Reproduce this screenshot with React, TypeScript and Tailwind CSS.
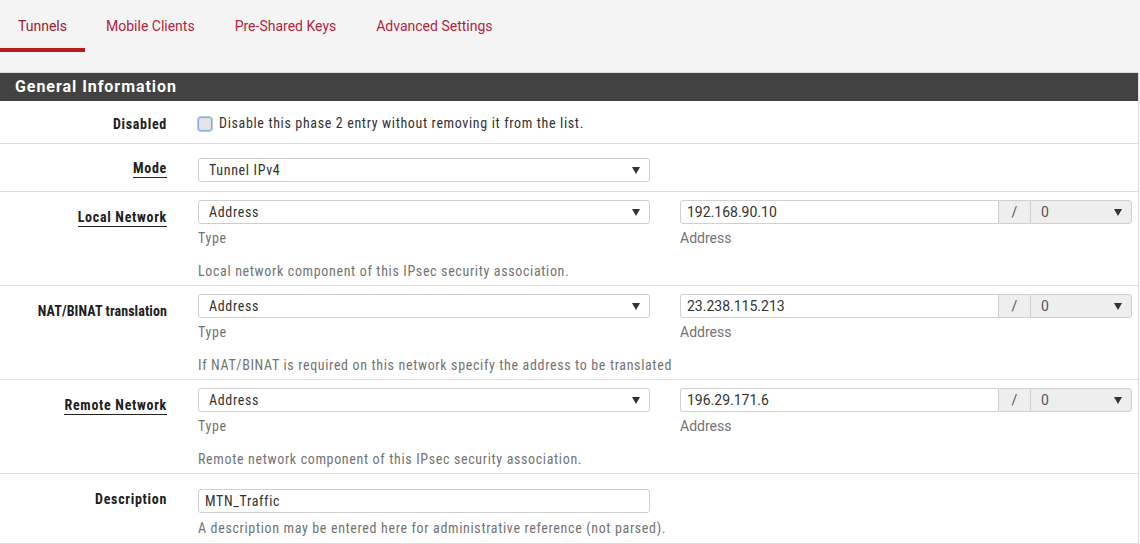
import React from 'react';

const cond = "font-['Roboto_Condensed','Roboto',sans-serif]";
const condText = "font-['Roboto_Condensed','Roboto',sans-serif] tracking-[0.65px]";

const Caret = () => (
    <svg width="8" height="8" viewBox="0 0 8 8" className="shrink-0">
        <path d="M0 1 L8 1 L4 8 Z" fill="#333" />
    </svg>
);

const Select: React.FC<{ value: string; className?: string }> = ({ value, className = '' }) => (
    <div className={`flex items-center justify-between h-[24px] border border-[#cfcfcf] rounded-[3px] bg-white pl-[10px] pr-[9px] text-[14px] text-[#333] ${className}`}>
        <span>{value}</span>
        <Caret />
    </div>
);

const Label: React.FC<{ text: string; underline?: boolean; tight?: boolean }> = ({ text, underline, tight }) => (
    <div className="w-[183px] shrink-0 pr-[16px] text-right">
        <span className={`${cond} ${tight ? 'tracking-[0.1px]' : 'tracking-[0.7px]'} text-[14px] font-bold text-[#212121] ${underline ? 'border-b border-[#212121] pb-[1px]' : ''}`}>
            {text}
        </span>
    </div>
);

const NetworkRow: React.FC<{ label: string; underline?: boolean; tight?: boolean; ip: string; help: string }> = ({ label, underline, tight, ip, help }) => (
    <div className="flex border-b border-[#ddd] pt-[8px] h-[94px]">
        <div className="pt-[5px]"><Label text={label} underline={underline} tight={tight} /></div>
        <div className="pl-[15px] flex flex-col">
            <div className="flex gap-[30px]">
                <div className="w-[452px]">
                    <Select value="Address" className={condText} />
                    <div className={`${condText} text-[14px] text-[#737373] mt-[4px]`}>Type</div>
                </div>
                <div className="w-[452px]">
                    <div className="flex h-[24px]">
                        <div className="flex-1 border border-[#cfcfcf] rounded-l-[3px] flex items-center pl-[6px] text-[14px] text-[#333] font-['Roboto',sans-serif]">{ip}</div>
                        <div className="w-[31px] border-y border-[#cfcfcf] bg-[#eee] flex items-center justify-center text-[14px] text-[#555]">/</div>
                        <div className="w-[102px] border border-[#cfcfcf] rounded-r-[3px] bg-[#eee] flex items-center justify-between pl-[10px] pr-[9px] text-[14px] text-[#555]">
                            <span>0</span>
                            <Caret />
                        </div>
                    </div>
                    <div className="text-[14px] text-[#737373] mt-[4px] font-['Roboto',sans-serif]">Address</div>
                </div>
            </div>
            <div className={`${condText} text-[14px] text-[#737373] mt-[12px]`}>{help}</div>
        </div>
    </div>
);

export default function App() {
    return (
        <div className="w-[1140px] h-[544px] bg-[#f4f4f4] overflow-hidden font-['Roboto',sans-serif]">
            {/* Tabs */}
            <div className="flex h-[52px] text-[14px]">
                <div className="w-[85px] flex items-start justify-center pt-[16px] border-b-[4px] border-[#b71c1c] text-[#9a1b2b]">Tunnels</div>
                <div className="px-[21px] pt-[16px] text-[#b3243f]">Mobile Clients</div>
                <div className="px-[19px] pt-[16px] text-[#b3243f]">Pre-Shared Keys</div>
                <div className="px-[21px] pt-[16px] text-[#b3243f]">Advanced Settings</div>
            </div>

            {/* Panel */}
            <div className="mt-[20px] w-[1139px] bg-white border-t border-r border-[#ddd]">
                <div className="h-[28px] bg-[#424242] flex items-center pl-[15px] text-white text-[16px] font-bold tracking-[0.95px]">
                    General Information
                </div>

                {/* Disabled */}
                <div className="flex items-center border-b border-[#ddd] h-[43px] pt-[3px]">
                    <Label text="Disabled" />
                    <div className={`pl-[15px] flex items-center gap-[7px] ${condText} text-[14px] text-[#333]`}>
                        <span className="w-[14px] h-[14px] rounded-[3px] bg-[#e4e4e4] border border-[#7ea6e6] shadow-[0_0_0_1px_#b9cff3]" />
                        <span>Disable this phase 2 entry without removing it from the list.</span>
                    </div>
                </div>

                {/* Mode */}
                <div className="flex border-b border-[#ddd] h-[48px] pt-[14px]">
                    <div className="-mt-[2px]"><Label text="Mode" underline /></div>
                    <div className="pl-[15px]">
                        <Select value="Tunnel IPv4" className={`w-[452px] ${condText}`} />
                    </div>
                </div>

                <NetworkRow label="Local Network" underline ip="192.168.90.10" help="Local network component of this IPsec security association." />
                <NetworkRow label="NAT/BINAT translation" tight ip="23.238.115.213" help="If NAT/BINAT is required on this network specify the address to be translated" />
                <NetworkRow label="Remote Network" underline ip="196.29.171.6" help="Remote network component of this IPsec security association." />

                {/* Description */}
                <div className="flex border-b border-[#ddd] h-[70px] pt-[15px]">
                    <div className="-mt-[2px]"><Label text="Description" /></div>
                    <div className="pl-[15px]">
                        <div className={`w-[452px] h-[24px] border border-[#cfcfcf] rounded-[3px] flex items-center pl-[6px] text-[14px] text-[#333] ${condText}`}>MTN_Traffic</div>
                        <div className={`${condText} text-[14px] text-[#737373] mt-[5px]`}>A description may be entered here for administrative reference (not parsed).</div>
                    </div>
                </div>
            </div>
        </div>
    );
}
